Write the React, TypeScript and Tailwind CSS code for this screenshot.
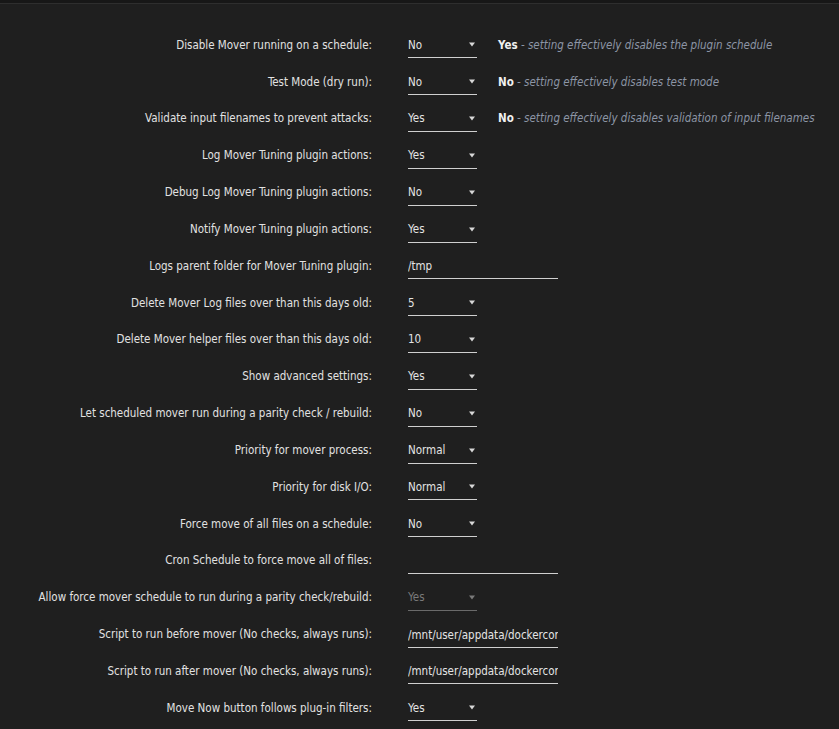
type Row = {
  label: string;
  kind: "select" | "input";
  value: string;
  disabled?: boolean;
  noteBold?: string;
  note?: string;
};

const rows: Row[] = [
  { label: "Disable Mover running on a schedule:", kind: "select", value: "No", noteBold: "Yes", note: "setting effectively disables the plugin schedule" },
  { label: "Test Mode (dry run):", kind: "select", value: "No", noteBold: "No", note: "setting effectively disables test mode" },
  { label: "Validate input filenames to prevent attacks:", kind: "select", value: "Yes", noteBold: "No", note: "setting effectively disables validation of input filenames" },
  { label: "Log Mover Tuning plugin actions:", kind: "select", value: "Yes" },
  { label: "Debug Log Mover Tuning plugin actions:", kind: "select", value: "No" },
  { label: "Notify Mover Tuning plugin actions:", kind: "select", value: "Yes" },
  { label: "Logs parent folder for Mover Tuning plugin:", kind: "input", value: "/tmp" },
  { label: "Delete Mover Log files over than this days old:", kind: "select", value: "5" },
  { label: "Delete Mover helper files over than this days old:", kind: "select", value: "10" },
  { label: "Show advanced settings:", kind: "select", value: "Yes" },
  { label: "Let scheduled mover run during a parity check / rebuild:", kind: "select", value: "No" },
  { label: "Priority for mover process:", kind: "select", value: "Normal" },
  { label: "Priority for disk I/O:", kind: "select", value: "Normal" },
  { label: "Force move of all files on a schedule:", kind: "select", value: "No" },
  { label: "Cron Schedule to force move all of files:", kind: "input", value: "" },
  { label: "Allow force mover schedule to run during a parity check/rebuild:", kind: "select", value: "Yes", disabled: true },
  { label: "Script to run before mover (No checks, always runs):", kind: "input", value: "/mnt/user/appdata/dockerconfig/scripts/before.sh" },
  { label: "Script to run after mover (No checks, always runs):", kind: "input", value: "/mnt/user/appdata/dockerconfig/scripts/after.sh" },
  { label: "Move Now button follows plug-in filters:", kind: "select", value: "Yes" },
];

function Caret({ color }: { color: string }) {
  return (
    <svg width="6" height="5" viewBox="0 0 6 5" className="mr-[2px]">
      <polygon points="0,0.5 6,0.5 3,4.5" fill={color} />
    </svg>
  );
}

function Select({ value, disabled }: { value: string; disabled?: boolean }) {
  return (
    <div
      className={`flex h-[26px] w-[69px] items-center justify-between border-b ${
        disabled ? "border-[#6a6a6a] text-[#7a7a7a]" : "border-[#d0d0d0] text-[#e4e4e4]"
      }`}
    >
      <span className="pt-px">{value}</span>
      <Caret color={disabled ? "#7a7a7a" : "#d8d8d8"} />
    </div>
  );
}

function Input({ value }: { value: string }) {
  return (
    <input
      type="text"
      readOnly
      value={value}
      className="block h-[26px] w-[150px] border-b border-[#d0d0d0] bg-transparent p-0 pt-px text-[#e4e4e4] outline-none"
    />
  );
}

export default function App() {
  return (
    <div className="min-h-[729px] w-[839px] bg-[#1f1f1f] text-[11.5px] font-['DejaVu_Sans_Condensed',sans-serif]">
      <div className="h-[3px] bg-[#171717]" />
      <div className="h-px bg-[#2e2e2e]" />
      <div className="pt-[23px]">
        {rows.map((r) => (
          <div key={r.label} className="flex h-[36.83px] items-center">
            <div className="w-[372px] shrink-0 whitespace-nowrap text-right text-[#e2e2e2]">{r.label}</div>
            <div className="ml-[36px] shrink-0">
              {r.kind === "select" ? <Select value={r.value} disabled={r.disabled} /> : <Input value={r.value} />}
            </div>
            {r.note && (
              <div className="ml-[21px] whitespace-nowrap">
                <span className="font-bold text-[#f0f0f0]">{r.noteBold}</span>
                <span className="italic text-[#8c95a5]"> - {r.note}</span>
              </div>
            )}
          </div>
        ))}
      </div>
    </div>
  );
}
